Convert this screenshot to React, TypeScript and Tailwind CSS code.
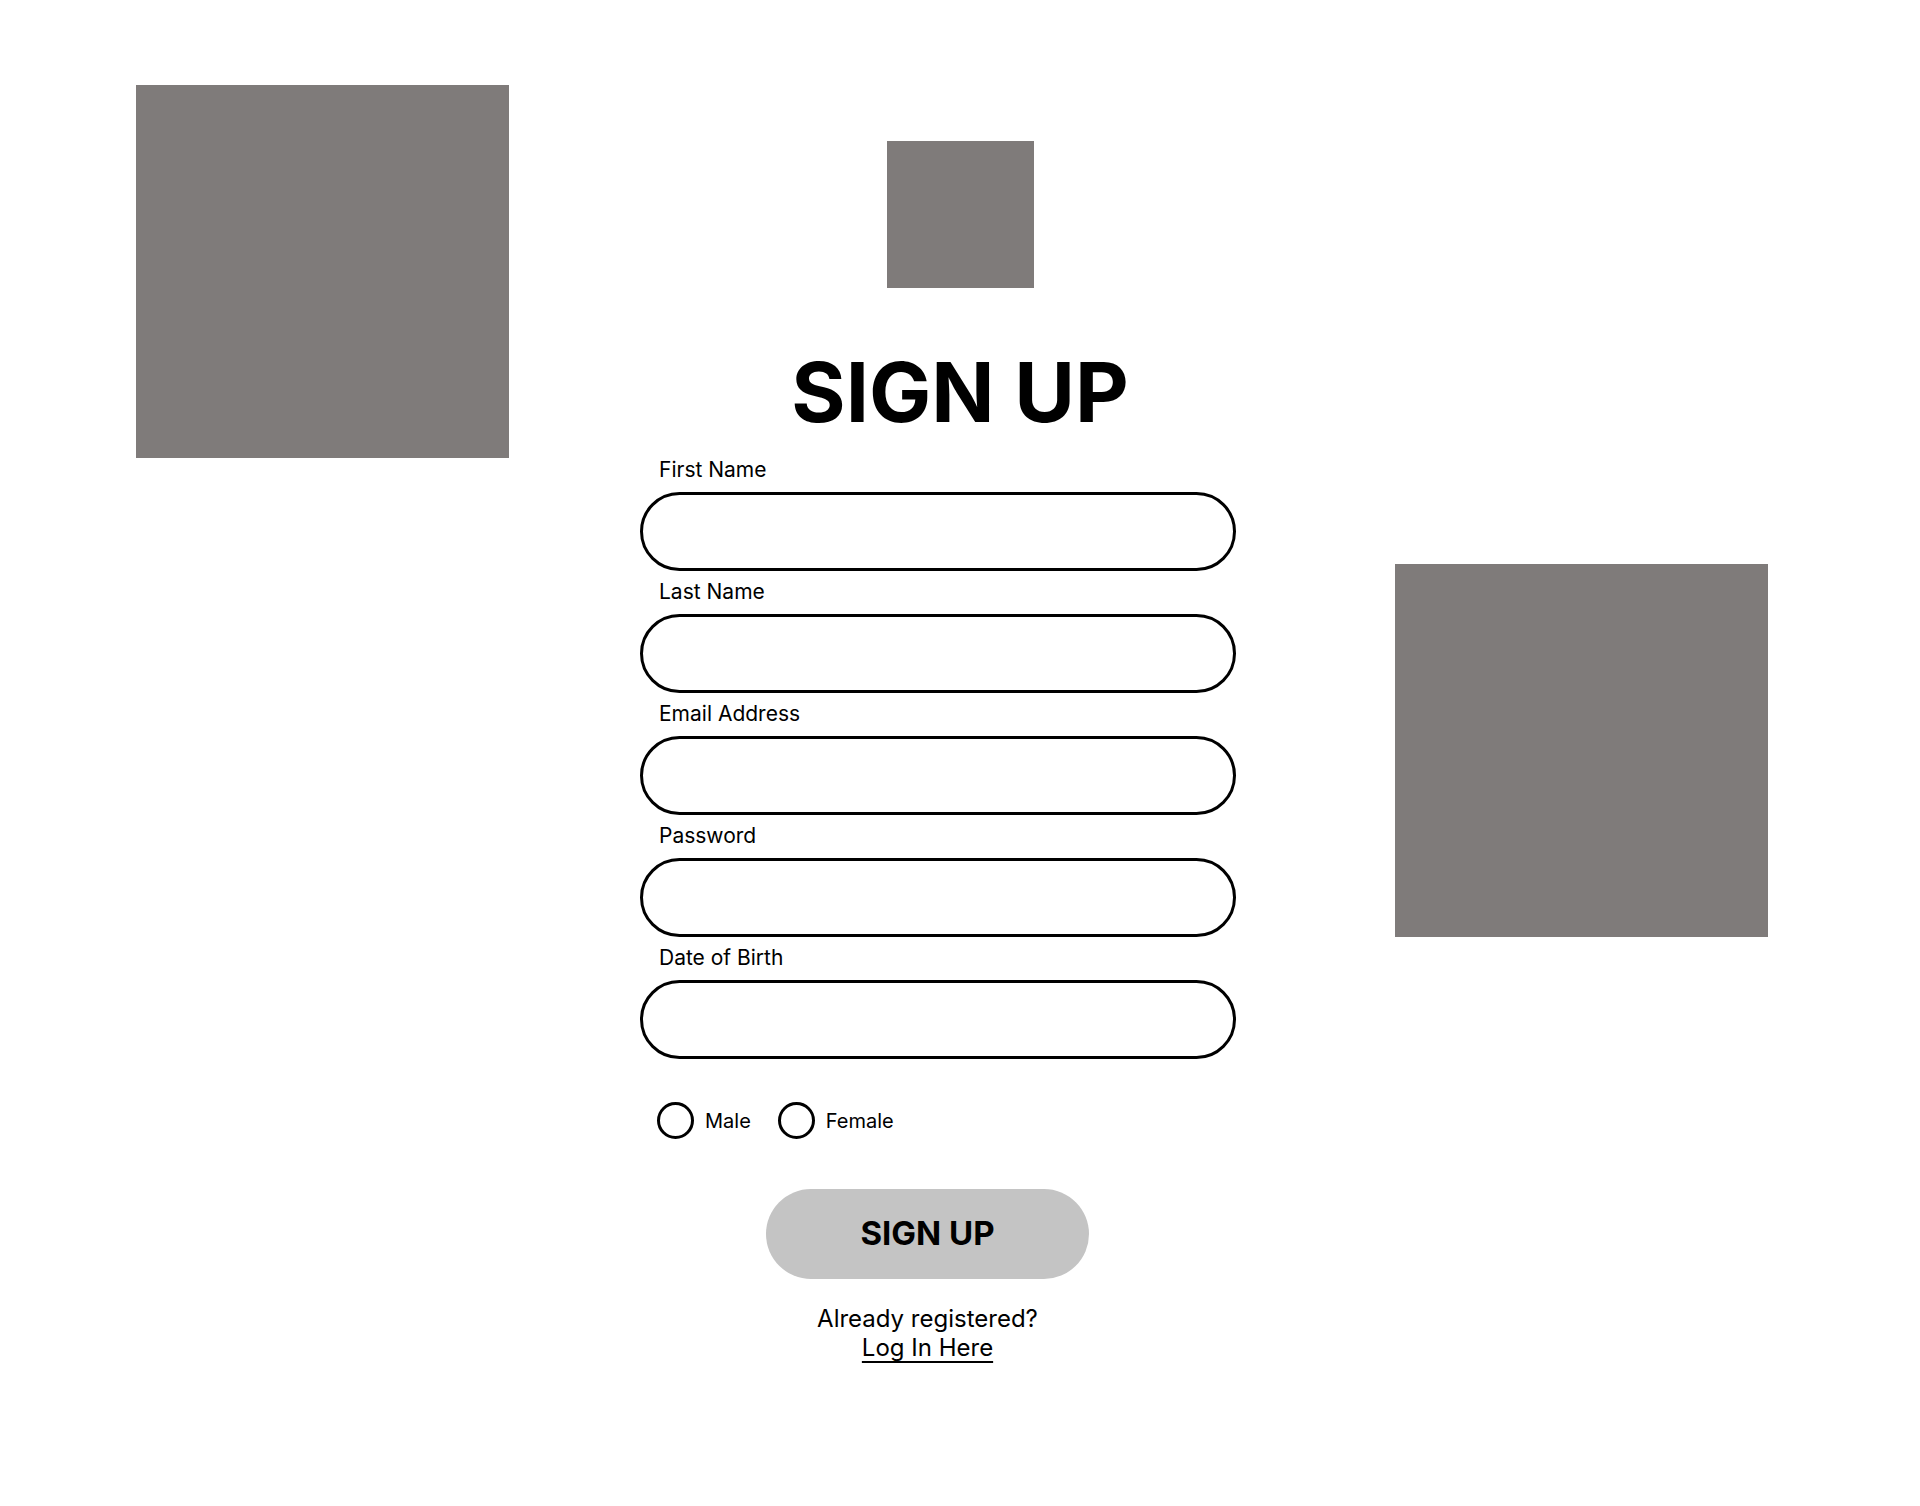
import { useState } from "react";

const fields = [
  { id: "firstName", label: "First Name", type: "text" },
  { id: "lastName", label: "Last Name", type: "text" },
  { id: "email", label: "Email Address", type: "email" },
  { id: "password", label: "Password", type: "password" },
  { id: "dob", label: "Date of Birth", type: "text" },
];

export default function App() {
  const [gender, setGender] = useState("");

  return (
    <div
      className="w-full min-h-[1506px] bg-white text-black"
      style={{ fontFamily: "Inter, 'Noto Sans', sans-serif" }}
    >
      <div className="flex pl-[136px] pt-[85px]">
        {/* Left placeholder image */}
        <div className="w-[373px] h-[373px] shrink-0 bg-[#7f7b7a]" />

        {/* Form column */}
        <div className="ml-[131px] w-[640px] shrink-0 flex flex-col">
          <div className="mt-[56px] self-center w-[147px] h-[147px] bg-[#7f7b7a]" />
          <h1 className="mt-[64px] self-center text-[83px] leading-[80px] font-bold">
            SIGN UP
          </h1>

          <form className="mt-[26px] flex flex-col" onSubmit={(e) => e.preventDefault()}>
            {fields.map((f) => (
              <div key={f.id} className="flex flex-col mb-[9px]">
                <label htmlFor={f.id} className="pl-[19px] text-[21px] leading-[24px] mb-[10px]">
                  {f.label}
                </label>
                <input
                  id={f.id}
                  type={f.type}
                  className="w-[596px] h-[79px] rounded-full border-[3px] border-black px-8 text-[20px] outline-none"
                />
              </div>
            ))}

            {/* Gender */}
            <div className="mt-[34px] ml-[17px] flex items-center h-[37px]">
              {["Male", "Female"].map((g) => (
                <label key={g} className="flex items-center mr-[27px] cursor-pointer">
                  <input
                    type="radio"
                    name="gender"
                    value={g}
                    checked={gender === g}
                    onChange={() => setGender(g)}
                    className="sr-only"
                  />
                  <span className="w-[37px] h-[37px] rounded-full border-[3px] border-black flex items-center justify-center">
                    {gender === g && <span className="w-[17px] h-[17px] rounded-full bg-black" />}
                  </span>
                  <span className="ml-[11px] text-[20px] leading-[24px]">{g}</span>
                </label>
              ))}
            </div>

            <div className="ml-[126px] w-[323px] flex flex-col items-center">
              <button
                type="submit"
                className="mt-[50px] w-[323px] h-[90px] rounded-full bg-[#c4c4c4] text-[33px] font-bold"
              >
                SIGN UP
              </button>
              <p className="mt-[25px] text-[24px] leading-[29px] text-center">Already registered?</p>
              <a href="#" className="text-[24px] leading-[29px] underline underline-offset-[5px]">
                Log In Here
              </a>
            </div>
          </form>
        </div>

        {/* Right placeholder image */}
        <div className="ml-[115px] mt-[479px] w-[373px] h-[373px] shrink-0 bg-[#7f7b7a]" />
      </div>
    </div>
  );
}
